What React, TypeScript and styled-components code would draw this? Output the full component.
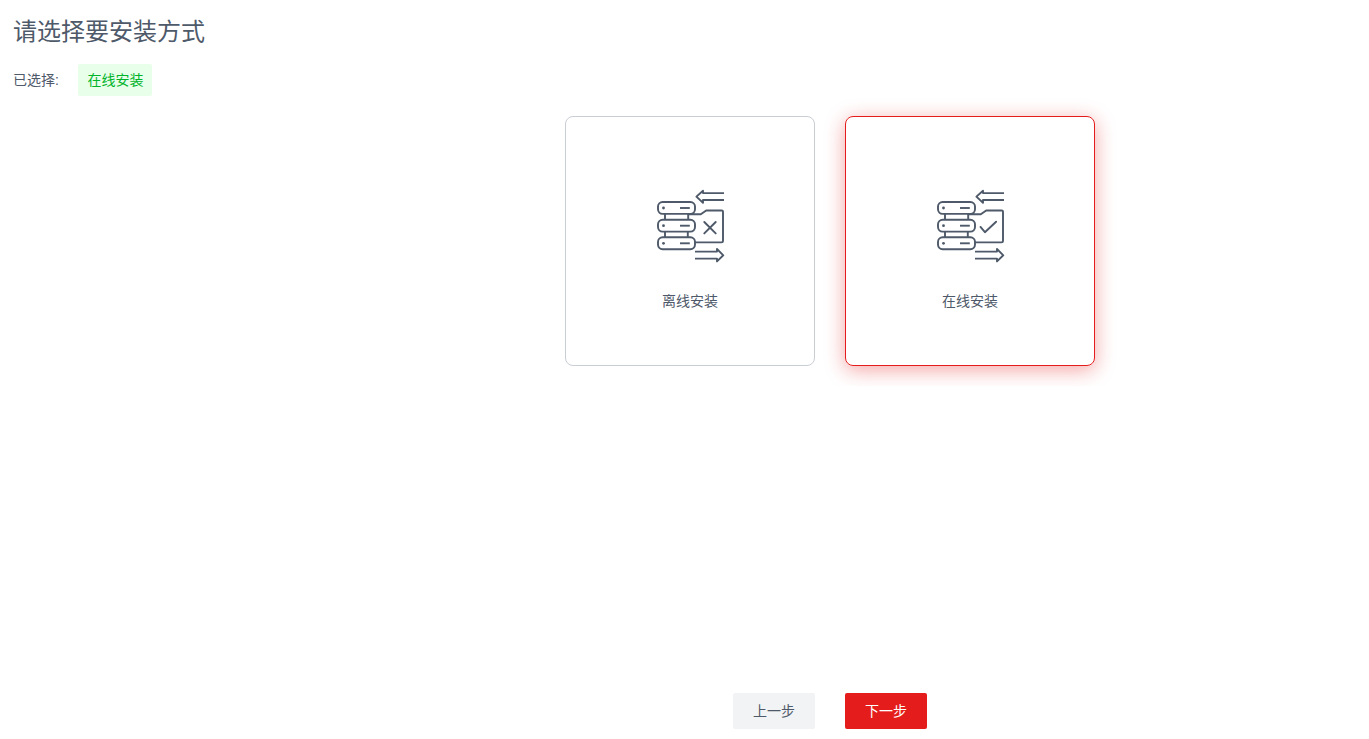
import React from 'react';
import styled, { createGlobalStyle } from 'styled-components';

const GlobalStyle = createGlobalStyle`
  * { box-sizing: border-box; }
  body {
    margin: 0;
    background: #fff;
    color: #4e5969;
    font: 14px/20px "Liberation Sans", "Noto Sans CJK SC", sans-serif;
  }
`;

const Page = styled.main`
  height: 739px;
  display: flex;
  flex-direction: column;
  padding: 14px 0 10px;
  overflow: hidden;
`;

const Title = styled.h1`
  margin: 0 0 14px 13px;
  font-size: 24px;
  font-weight: 400;
  line-height: 36px;
`;

const Selection = styled.div`
  display: flex;
  align-items: center;
  gap: 19px;
  height: 32px;
  padding-left: 13px;
`;

const Tag = styled.span`
  height: 32px;
  width: 74px;
  padding-left: 1px;
  text-align: center;
  line-height: 32px;
  border-radius: 2px;
  background: #e8ffea;
  color: #00b42a;
`;

const Options = styled.section`
  display: flex;
  justify-content: center;
  gap: 30px;
  padding: 20px 0;
  margin-left: 291px;
  overflow: hidden;
`;

const Card = styled.div<{ $active?: boolean }>`
  width: 250px;
  height: 250px;
  display: flex;
  flex-direction: column;
  align-items: center;
  padding-top: 63px;
  gap: 21px;
  border: 1px solid ${p => (p.$active ? '#e51c1c' : '#c9cdd4')};
  border-radius: 8px;
  box-shadow: ${p => (p.$active ? '0 4px 20px rgba(229, 28, 28, 0.4)' : 'none')};
  cursor: pointer;
`;

const Icon = styled.svg`
  width: 90px;
  height: 90px;
  fill: none;
  stroke: #4e5969;
  stroke-width: 1.9;
  stroke-linejoin: round;
`;

const Actions = styled.footer`
  display: flex;
  justify-content: center;
  gap: 30px;
  margin: auto 0 0 291px;
`;

const Button = styled.button<{ $primary?: boolean }>`
  width: 82px;
  height: 36px;
  padding: 0;
  border: 0;
  border-radius: 2px;
  font: inherit;
  background: ${p => (p.$primary ? '#e51c1c' : '#f2f3f5')};
  color: ${p => (p.$primary ? '#fff' : '#4e5969')};
  cursor: pointer;
`;

const SERVER_ROWS = [22, 39.7, 57.3];

function ServerIcon({ mark }: { mark: string }) {
  return (
    <Icon viewBox="0 0 90 90" aria-hidden="true">
      {SERVER_ROWS.map(y => (
        <g key={y}>
          <rect x="13" y={y} width="37" height="11.9" rx="4.6" />
          <circle cx="18.5" cy={y + 6} r="1.4" fill="#4e5969" stroke="none" />
          <path d={`M35 ${y + 6}H44.8`} />
        </g>
      ))}
      <path d="M20 34v5.5M43.2 34v5.5M20 51.8v5.3M42.8 51.8v5.3" />
      <path d="M43.5 34.3H55.8L61.2 30.5H76.7q1.3 0 1.3 1.3V61q0 1.4-1.4 1.4H50" />
      <path d={mark} strokeLinecap="round" />
      <path d="M79 13.1H58V10.7L51.4 16.6L58 22.8V20H79" />
      <path d="M50 71.6H72V69L78.3 75.3L72 81.4V78.6H50" />
    </Icon>
  );
}

export default function App() {
  return (
    <Page>
      <GlobalStyle />
      <Title>请选择要安装方式</Title>
      <Selection>
        <span>已选择:</span>
        <Tag>在线安装</Tag>
      </Selection>
      <Options>
        <Card>
          <ServerIcon mark="M59.3 42L70.7 53.4M70.7 42L59.3 53.4" />
          <span>离线安装</span>
        </Card>
        <Card $active>
          <ServerIcon mark="M55.5 46.9L59.9 52.2L71.1 41.7" />
          <span>在线安装</span>
        </Card>
      </Options>
      <Actions>
        <Button>上一步</Button>
        <Button $primary>下一步</Button>
      </Actions>
    </Page>
  );
}
